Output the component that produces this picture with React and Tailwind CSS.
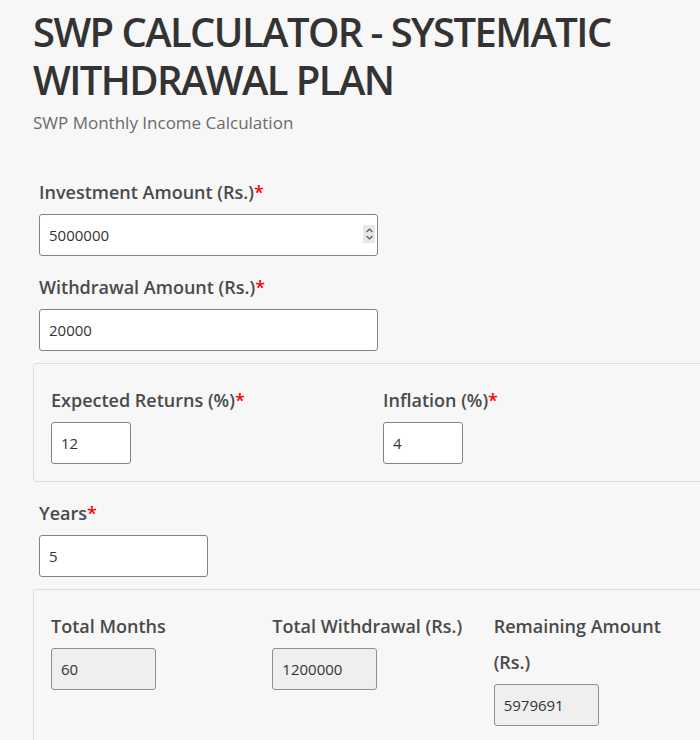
import React from "react";

const Label = ({ children, required }) => (
  <label className="block mb-1 text-[18px] leading-[36px] font-semibold text-[#4a4a4a]">
    {children}
    {required && <span className="text-[#ff0000]">*</span>}
  </label>
);

const Field = ({ value, className = "", disabled, spinner }) => (
  <div className={`relative ${className}`}>
    <input
      type="text"
      readOnly
      value={value}
      className={`w-full h-[42px] rounded-[3px] border border-[#7d8390] pl-[9px] text-[15px] text-[#333] outline-none ${
        disabled ? "bg-[#efefef] border-[#8f8f8f]" : "bg-white"
      }`}
    />
    {spinner && (
      <span className="absolute right-[3px] top-[11px] w-[12px] h-[18px] bg-[#e8e8e8] flex flex-col items-center justify-center">
        <svg width="9" height="14" viewBox="0 0 9 14" fill="none" stroke="#555" strokeWidth="1.1">
          <path d="M1.5 5 L4.5 2 L7.5 5" />
          <path d="M1.5 9 L4.5 12 L7.5 9" />
        </svg>
      </span>
    )}
  </div>
);

export default function App() {
  return (
    <div
      className="w-[700px] h-[740px] overflow-hidden bg-[#f7f7f7]"
      style={{ fontFamily: '"Open Sans", "Noto Sans", sans-serif' }}
    >
      <div className="pl-[33px] pt-[8px]">
        <h1 className="text-[40px] leading-[48px] font-semibold text-[#333] tracking-[-1.6px]">
          SWP CALCULATOR - SYSTEMATIC
          <br />
          WITHDRAWAL PLAN
        </h1>
        <p className="mt-[6px] text-[17px] leading-[26px] text-[#6b6b6b]">
          SWP Monthly Income Calculation
        </p>

        <div className="mt-[38px] w-[700px]">
          <div className="pl-[6px] mb-[13px]">
            <Label required>Investment Amount (Rs.)</Label>
            <Field value="5000000" className="w-[339px]" spinner />
          </div>

          <div className="pl-[6px] mb-[12px]">
            <Label required>Withdrawal Amount (Rs.)</Label>
            <Field value="20000" className="w-[339px]" />
          </div>

          <div className="border border-[#dddddd] rounded-[3px] px-[17px] pt-[18px] pb-[17px] mb-[13px] grid grid-cols-2">
            <div>
              <Label required>Expected Returns (%)</Label>
              <Field value="12" className="w-[80px]" />
            </div>
            <div>
              <Label required>Inflation (%)</Label>
              <Field value="4" className="w-[80px]" />
            </div>
          </div>

          <div className="pl-[6px] mb-[12px]">
            <Label required>Years</Label>
            <Field value="5" className="w-[169px]" />
          </div>

          <div className="border border-[#dddddd] rounded-[3px] px-[17px] pt-[18px] pb-[20px] grid grid-cols-3">
            <div className="pr-[15px]">
              <Label>Total Months</Label>
              <Field value="60" className="w-[105px]" disabled />
            </div>
            <div className="pr-[15px]">
              <Label>Total Withdrawal (Rs.)</Label>
              <Field value="1200000" className="w-[105px]" disabled />
            </div>
            <div className="pr-[15px]">
              <Label>Remaining Amount (Rs.)</Label>
              <Field value="5979691" className="w-[105px]" disabled />
            </div>
          </div>
        </div>
      </div>
    </div>
  );
}
